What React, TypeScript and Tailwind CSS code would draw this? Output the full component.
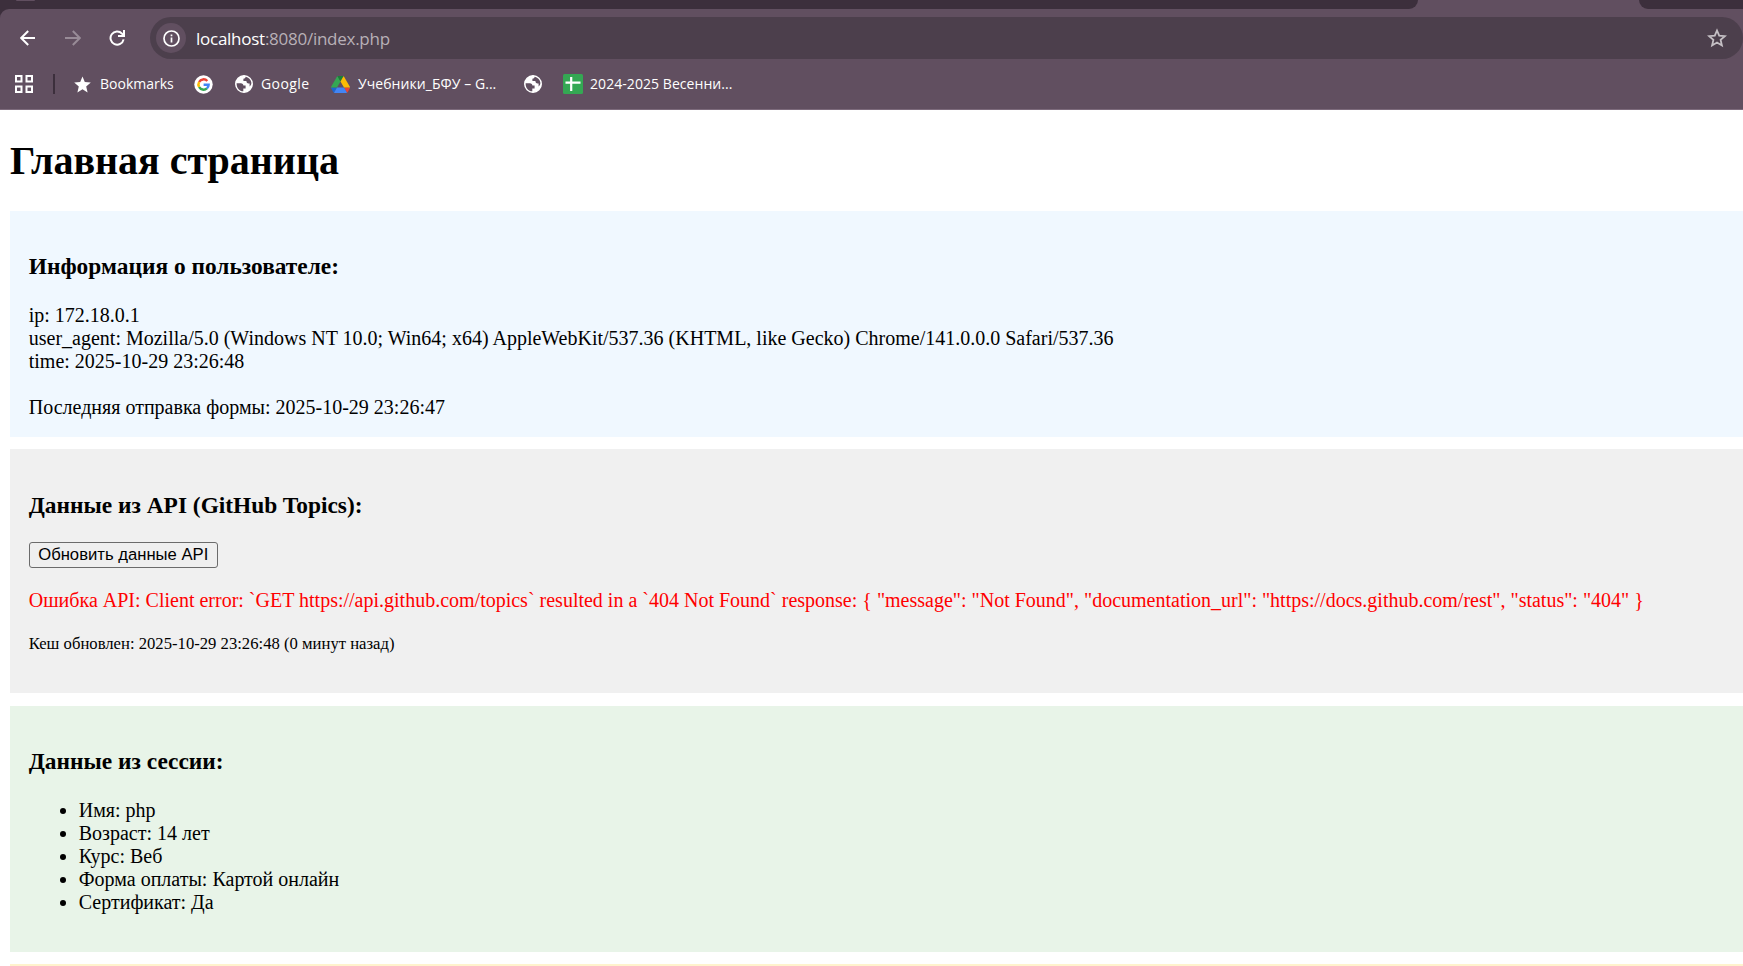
import type { ReactNode } from "react";

const ui = "font-['Open_Sans','Noto_Sans',sans-serif]";

function Globe() {
  return (
    <svg className="h-[18px] w-[18px] shrink-0" viewBox="0 0 18 18">
      <circle cx="9" cy="9" r="8.2" fill="#fff" stroke="#fff" strokeWidth="1.6" />
      <path d="M1.6 8.2h4.2c1.7 0 2.6 1 2.6 2.4h2.2v3H8.3v2.7C4.3 16.2 1.5 13 1.6 8.2z" fill="#614f60" />
      <path d="M10.6 1.8c-.2 1.5-1 1.9-2.2 2v2.3h3c0 1.8.8 2.3 2.2 2.3h1v3c1.5-1 2-2.5 1.7-4.2-.5-2.7-2.7-4.9-5.7-5.4z" fill="#614f60" />
    </svg>
  );
}

function GoogleG() {
  return (
    <svg className="h-[19px] w-[19px] shrink-0" viewBox="0 0 19 19">
      <circle cx="9.5" cy="9.5" r="9.2" fill="#fff" />
      <g fill="none" strokeWidth="2.5">
        <path d="M13.3 6A5.1 5.1 0 0 0 5.1 7" stroke="#ea4335" />
        <path d="M5.1 7a5.1 5.1 0 0 0 0 5" stroke="#fbbc05" />
        <path d="M5.1 12a5.1 5.1 0 0 0 7.8 1.4" stroke="#34a853" />
        <path d="M12.9 13.4a5.1 5.1 0 0 0 1.7-3.7H9.6" stroke="#4285f4" />
      </g>
    </svg>
  );
}

function Drive() {
  return (
    <svg className="h-[17px] w-[19px] shrink-0" viewBox="0 0 87.3 78">
      <path d="m6.6 66.85 3.85 6.65c.8 1.4 1.95 2.5 3.3 3.3l13.75-23.8h-27.5c0 1.55.4 3.1 1.2 4.5z" fill="#1967d2" />
      <path d="m43.65 25-13.75-23.8c-1.35.8-2.5 1.9-3.3 3.3l-25.4 44a9.06 9.06 0 0 0 -1.2 4.5h27.5z" fill="#34a853" />
      <path d="m73.55 76.8c1.35-.8 2.5-1.9 3.3-3.3l1.6-2.75 7.65-13.25c.8-1.4 1.2-2.95 1.2-4.5h-27.502l5.852 11.5z" fill="#ea4335" />
      <path d="m43.65 25 13.75-23.8c-1.35-.8-2.9-1.2-4.5-1.2h-18.5c-1.6 0-3.15.45-4.5 1.2z" fill="#188038" />
      <path d="m59.8 53h-32.3l-13.75 23.8c1.35.8 2.9 1.2 4.5 1.2h50.8c1.6 0 3.15-.45 4.5-1.2z" fill="#4285f4" />
      <path d="m73.4 26.5-12.7-22c-.8-1.4-1.95-2.5-3.3-3.3l-13.75 23.8 16.15 28h27.45c0-1.55-.4-3.1-1.2-4.5z" fill="#fbbc04" />
    </svg>
  );
}

function TabStrip() {
  return (
    <div className="flex h-[9px] bg-[#614f60]">
      <div className="w-[1418px] rounded-br-[14px] bg-[#3c2f3c]">
        <div className="ml-4 h-px w-[19px] rounded-b bg-[#614f60]" />
      </div>
      <div className="w-[221px]" />
      <div className="flex-1 rounded-bl-[14px] bg-[#3c2f3c]" />
    </div>
  );
}

function Toolbar() {
  return (
    <div className="bg-[#3c2f3c]">
      <div className="flex h-[50px] items-start rounded-tl-[9px] bg-[#614f60] pt-2">
        <div className="flex h-[42px] w-[150px] shrink-0 items-center">
          <svg className="ml-5 h-4 w-4" viewBox="0 0 16 16" fill="none" stroke="#fff" strokeWidth="2">
            <path d="M15 8H1.5M8.2 1 1.2 8l7 7" />
          </svg>
          <svg className="ml-[29px] h-4 w-4" viewBox="0 0 16 16" fill="none" stroke="#988b97" strokeWidth="2">
            <path d="M0 8h14.5M7.8 1l7 7-7 7" />
          </svg>
          <svg className="ml-7 h-4 w-4" viewBox="0 0 16 16" fill="none" stroke="#fff" strokeWidth="2">
            <path d="M14.6 9.4A6.6 6.6 0 1 1 13 3.6l1.5 1.8M15 0v6H9" />
          </svg>
        </div>
        <div className="flex h-[42px] flex-1 items-center rounded-full bg-[#4c3f4c]">
          <div className="ml-1.5 flex h-[30px] w-[30px] items-center justify-center rounded-full bg-[#614f60]">
            <svg className="h-[17px] w-[17px]" viewBox="0 0 17 17" fill="none" stroke="#fff">
              <circle cx="8.5" cy="8.5" r="7.5" strokeWidth="1.7" />
              <path d="M8.5 7.6v4.8M8.5 4.5v1.8" strokeWidth="1.7" />
            </svg>
          </div>
          <div className={`ml-2.5 flex-1 pt-px text-[17px] tracking-[-0.26px] text-[#b8b0b7] ${ui}`}>
            <span className="text-white">localhost</span>:8080/index.php
          </div>
          <svg className="mr-4 h-5 w-5" viewBox="0 0 20 20" fill="none" stroke="#c5c0c5" strokeWidth="1.8">
            <path d="m10 2.5 2.2 5.2 5.7.5-4.3 3.7 1.3 5.5L10 14.5l-4.9 2.9 1.3-5.5-4.3-3.7 5.7-.5z" />
          </svg>
        </div>
      </div>
    </div>
  );
}

function BookmarkBar() {
  return (
    <div className={`flex h-[51px] items-center border-b border-[#7d6b7c] bg-[#614f60] text-[14px] whitespace-nowrap text-white ${ui}`}>
      <svg className="ml-[15px] h-[18px] w-[18px]" viewBox="0 0 18 18" fill="none" stroke="#fff" strokeWidth="2">
        <path d="M1 1h5.5v5.5H1zM11.5 1H17v5.5h-5.5zM1 11.5h5.5V17H1zM11.5 11.5H17V17h-5.5z" />
      </svg>
      <div className="ml-5 h-5 w-0.5 bg-[#3c2f3c]" />
      <svg className="ml-[19px] h-[17px] w-[17px]" viewBox="0 0 17 17" fill="#fff">
        <path d="m8.5.5 2.3 5.6 6 .5-4.6 3.9 1.4 5.9-5.1-3.1-5.1 3.1 1.4-5.9L.2 6.6l6-.5z" />
      </svg>
      <span className="ml-[9px] w-[94px] pb-0.5">Bookmarks</span>
      <GoogleG />
      <span className="w-[22px]" />
      <Globe />
      <span className="ml-2 w-[70px] pb-0.5 tracking-[0.4px]">Google</span>
      <Drive />
      <span className="ml-2 w-[166px] pb-0.5 tracking-[0.06px]">Учебники_БФУ – G...</span>
      <Globe />
      <svg className="ml-[21px] h-5 w-5" viewBox="0 0 20 20">
        <rect width="20" height="20" rx="1.5" fill="#34a853" />
        <path d="M8.2 3v14M2.5 8.7h15" stroke="#fff" strokeWidth="2.2" fill="none" />
      </svg>
      <span className="ml-[7px] pb-0.5 tracking-[0.06px]">2024-2025 Весенни...</span>
    </div>
  );
}

function Panel({ title, className, children }: { title: string; className: string; children?: ReactNode }) {
  return (
    <section className={`mb-[12.5px] px-[18.75px] pt-[18.95px] pb-[18.15px] ${className}`}>
      <h3 className="mt-[23.4px] mb-[23.8px] h-[27px] text-[23.4px] leading-[27px] font-bold">{title}</h3>
      {children}
    </section>
  );
}

const session = ["Имя: php", "Возраст: 14 лет", "Курс: Веб", "Форма оплаты: Картой онлайн", "Сертификат: Да"];

export default function App() {
  return (
    <div className="h-[966px] overflow-hidden bg-white">
      <TabStrip />
      <Toolbar />
      <BookmarkBar />
      <main className="pl-2.5 font-['Liberation_Serif','Times_New_Roman',serif] text-[20px] leading-[23px] text-black">
        <h1 className="flex h-[100.5px] items-center pt-px text-[40px] leading-[46px] font-bold">Главная страница</h1>
        <Panel title="Информация о пользователе:" className="bg-[#f0f8ff]">
          <p>ip: 172.18.0.1</p>
          <p>user_agent: Mozilla/5.0 (Windows NT 10.0; Win64; x64) AppleWebKit/537.36 (KHTML, like Gecko) Chrome/141.0.0.0 Safari/537.36</p>
          <p>time: 2025-10-29 23:26:48</p>
          <p className="mt-[23px]">Последняя отправка формы: 2025-10-29 23:26:47</p>
        </Panel>
        <Panel title="Данные из API (GitHub Topics):" className="bg-[#f0f0f0]">
          <button className="block h-[26px] w-[189px] rounded-[3px] border border-[#6b6b6b] bg-[#efefef] font-['Liberation_Sans',Arial,sans-serif] text-[16.67px] leading-[22px]">
            Обновить данные API
          </button>
          <p className="mt-[20.4px] mb-[19.6px] whitespace-nowrap text-[#ff0000]">
            {'Ошибка API: Client error: `GET https://api.github.com/topics` resulted in a `404 Not Found` response: { "message": "Not Found", "documentation_url": "https://docs.github.com/rest", "status": "404" }'}
          </p>
          <p className="mb-[19.5px] pt-px text-[16.67px]">Кеш обновлен: 2025-10-29 23:26:48 (0 минут назад)</p>
        </Panel>
        <Panel title="Данные из сессии:" className="bg-[#e8f4e8]">
          <ul className="mb-5 list-disc pl-[50px]">
            {session.map((line) => (
              <li key={line}>{line}</li>
            ))}
          </ul>
        </Panel>
        <section className="h-10 bg-[#fff3cd]" />
      </main>
    </div>
  );
}
